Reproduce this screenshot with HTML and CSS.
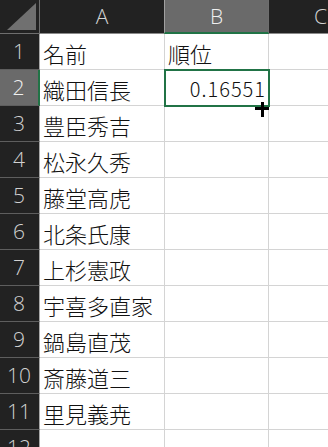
FILE: index.html
```html
<!DOCTYPE html>
<html lang="ja">
<head>
<meta charset="utf-8">
<title>Sheet</title>
<link rel="stylesheet" href="styles.css">
</head>
<body>
<div class="sheet">
  <div class="corner"><svg class="tri" width="40" height="34" viewBox="0 0 40 34"><polygon points="7,30 36,30 36,3" fill="#707070"/></svg></div>
  <div class="ch">A</div>
  <div class="ch ch-sel">B</div>
  <div class="ch">C</div>

  <div class="rh">1</div><div class="cell">名前</div><div class="cell">順位</div><div class="cell"></div>
  <div class="rh rh-sel">2</div><div class="cell">織田信長</div><div class="cell cell-active"><span class="num">0.16551</span><div class="sel"></div><svg class="cursor" width="17" height="17" viewBox="0 0 17 17"><rect x="1" y="6" width="14" height="3" fill="#000"/><rect x="7" y="1" width="3" height="15" fill="#000"/></svg></div><div class="cell"></div>
  <div class="rh">3</div><div class="cell">豊臣秀吉</div><div class="cell"></div><div class="cell"></div>
  <div class="rh">4</div><div class="cell">松永久秀</div><div class="cell"></div><div class="cell"></div>
  <div class="rh">5</div><div class="cell">藤堂高虎</div><div class="cell"></div><div class="cell"></div>
  <div class="rh">6</div><div class="cell">北条氏康</div><div class="cell"></div><div class="cell"></div>
  <div class="rh">7</div><div class="cell">上杉憲政</div><div class="cell"></div><div class="cell"></div>
  <div class="rh">8</div><div class="cell">宇喜多直家</div><div class="cell"></div><div class="cell"></div>
  <div class="rh">9</div><div class="cell">鍋島直茂</div><div class="cell"></div><div class="cell"></div>
  <div class="rh">10</div><div class="cell">斎藤道三</div><div class="cell"></div><div class="cell"></div>
  <div class="rh">11</div><div class="cell">里見義尭</div><div class="cell"></div><div class="cell"></div>
  <div class="rh">12</div><div class="cell"></div><div class="cell"></div><div class="cell"></div>
</div>
</body>
</html>
```
FILE: styles.css
```css
html, body {
  margin: 0;
  padding: 0;
  background: #ffffff;
  overflow: hidden;
}
.sheet {
  display: grid;
  grid-template-columns: 40px 125px 104px 104px;
  grid-template-rows: 34px repeat(12, 36px);
  width: 373px;
}
.corner {
  background: #222222;
  border-right: 1px solid #6e6e6e;
  border-bottom: 1px solid #6e6e6e;
  box-sizing: border-box;
  position: relative;
}
.tri {
  display: block;
}
.ch {
  background: #222222;
  color: #d2d2d2;
  font-family: "Open Sans", "Noto Sans", sans-serif;
  font-weight: 300;
  font-size: 21px;
  line-height: 1;
  display: flex;
  align-items: center;
  justify-content: center;
  border-right: 1px solid #6e6e6e;
  border-bottom: 1px solid #8a8a8a;
  box-sizing: border-box;
}
.ch-sel {
  background: #6a6a6a;
  color: #f0f0f0;
  border-left: 1px solid #a0a0a0;
  border-bottom: 2px solid #217346;
  margin-left: -1px;
}
.rh {
  background: #222222;
  color: #d2d2d2;
  font-family: "Open Sans", "Noto Sans", sans-serif;
  font-weight: 300;
  font-size: 21px;
  line-height: 1;
  display: flex;
  align-items: center;
  justify-content: center;
  border-right: 1px solid #a8a8a8;
  border-bottom: 1px solid #5e5e5e;
  box-sizing: border-box;
  padding-right: 1px;
}
.rh-sel {
  background: #6a6a6a;
  color: #f0f0f0;
  border-right: 2px solid #217346;
}
.cell {
  border-right: 1px solid #d4d4d4;
  border-bottom: 1px solid #d4d4d4;
  box-sizing: border-box;
  font-family: "Noto Sans CJK JP", "Noto Sans", sans-serif;
  font-weight: 300;
  font-size: 22px;
  color: #111111;
  display: flex;
  align-items: center;
  padding: 2px 3px 0 3px;
  white-space: nowrap;
  overflow: visible;
  line-height: 1;
}
.cell-active {
  position: relative;
  justify-content: flex-end;
  padding-right: 3px;
}
.num {
  font-size: 20px;
  letter-spacing: 1px;
  margin-right: -1px;
}
.sel {
  position: absolute;
  left: -1px;
  top: -1px;
  width: 106px;
  height: 38px;
  border: 2px solid #217346;
  box-sizing: border-box;
  pointer-events: none;
}
.cursor {
  position: absolute;
  left: 89px;
  top: 31px;
  z-index: 2;
}
```
